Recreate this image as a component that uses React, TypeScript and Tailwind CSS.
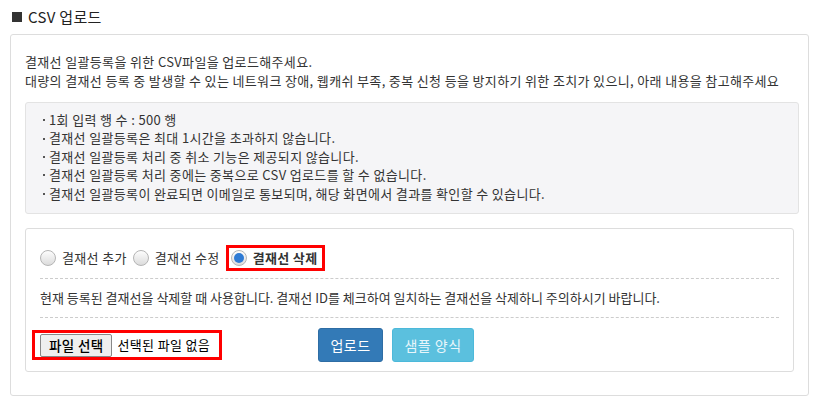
import React from 'react';

const notes = [
  '1회 입력 행 수 : 500 행',
  '결재선 일괄등록은 최대 1시간을 초과하지 않습니다.',
  '결재선 일괄등록 처리 중 취소 기능은 제공되지 않습니다.',
  '결재선 일괄등록 처리 중에는 중복으로 CSV 업로드를 할 수 없습니다.',
  '결재선 일괄등록이 완료되면 이메일로 통보되며, 해당 화면에서 결과를 확인할 수 있습니다.',
];

function Radio({ checked }: { checked?: boolean }) {
  return (
    <span className="flex h-[16px] w-[16px] items-center justify-center rounded-full border border-[#b5b5b5] bg-gradient-to-b from-[#fdfdfd] to-[#dcdcdc]">
      {checked && <span className="h-[10px] w-[10px] rounded-full bg-[#2f7bd4]" />}
    </span>
  );
}

export default function App() {
  return (
    <div
      className="h-[412px] w-[828px] bg-white text-[13px] tracking-[0.35px] text-[#333]"
      style={{ fontFamily: '"Noto Sans CJK KR", "Noto Sans", sans-serif' }}
    >
      <div className="flex items-center gap-[6px] pl-[12px] pt-[6px] text-[15px] leading-[22px] tracking-[0.3px] text-[#222]">
        <span className="h-[10px] w-[10px] bg-[#333]" />
        <span>CSV 업로드</span>
      </div>

      <div className="ml-[10px] mt-[6px] w-[799px] rounded-[3px] border border-[#ddd] px-[14px] pb-[23px] pt-[17px]">
        <p className="leading-[19px]">결재선 일괄등록을 위한 CSV파일을 업로드해주세요.</p>
        <p className="whitespace-nowrap leading-[19px]">
          대량의 결재선 등록 중 발생할 수 있는 네트워크 장애, 웹캐쉬 부족, 중복 신청 등을 방지하기 위한 조치가 있으니, 아래 내용을 참고해주세요
        </p>

        <div className="mt-[12px] w-[774px] rounded-[3px] border border-[#e3e3e3] bg-[#f5f5f7] pb-[10px] pl-[17px] pt-[8px]">
          {notes.map((n) => (
            <div key={n} className="flex items-center gap-[4px] leading-[18.4px]">
              <span className="h-[2px] w-[2px] bg-[#555]" />
              <span>{n}</span>
            </div>
          ))}
        </div>

        <div className="mt-[14px] w-[769px] rounded-[3px] border border-[#ddd] px-[14px] pb-[9px] pt-[16px]">
          <div className="flex items-center">
            <label className="flex items-center gap-[6px] pr-[4px]">
              <Radio />
              <span>결재선 추가</span>
            </label>
            <label className="ml-[2px] flex items-center gap-[6px] pr-[4px]">
              <Radio />
              <span>결재선 수정</span>
            </label>
            <label className="ml-[2px] flex h-[26px] items-center gap-[6px] border-[3px] border-[#f00] pl-[2px] pr-[5px] font-bold">
              <Radio checked />
              <span>결재선 삭제</span>
            </label>
          </div>
          <div className="mt-[7px] border-t border-dashed border-[#ccc]" />
          <p className="whitespace-nowrap py-[9px] leading-[20px] tracking-[0px]">
            현재 등록된 결재선을 삭제할 때 사용합니다. 결재선 ID를 체크하여 일치하는 결재선을 삭제하니 주의하시기 바랍니다.
          </p>
          <div className="border-t border-dashed border-[#ccc]" />
          <div className="mt-[10px] flex items-center">
            <div className="-ml-[8px] flex h-[30px] w-[190px] items-center gap-[5px] border-[3px] border-[#f00] pl-[5px]">
              <button className="h-[23px] rounded-[2px] border border-[#888] bg-[#efefef] px-[8px] text-[13.5px] font-medium leading-[20px] text-black">
                파일 선택
              </button>
              <span className="text-[13px] text-black">선택된 파일 없음</span>
            </div>
            <button className="ml-[96px] h-[34px] w-[65px] rounded-[3px] border border-[#2e6da4] bg-[#337ab7] text-[14px] tracking-[0.5px] text-white">
              업로드
            </button>
            <button className="ml-[9px] h-[34px] w-[82px] rounded-[3px] border border-[#4cb9da] bg-[#5bc0de] text-[14px] tracking-[0.5px] text-[#e8f6fb]">
              샘플 양식
            </button>
          </div>
        </div>
      </div>
    </div>
  );
}
